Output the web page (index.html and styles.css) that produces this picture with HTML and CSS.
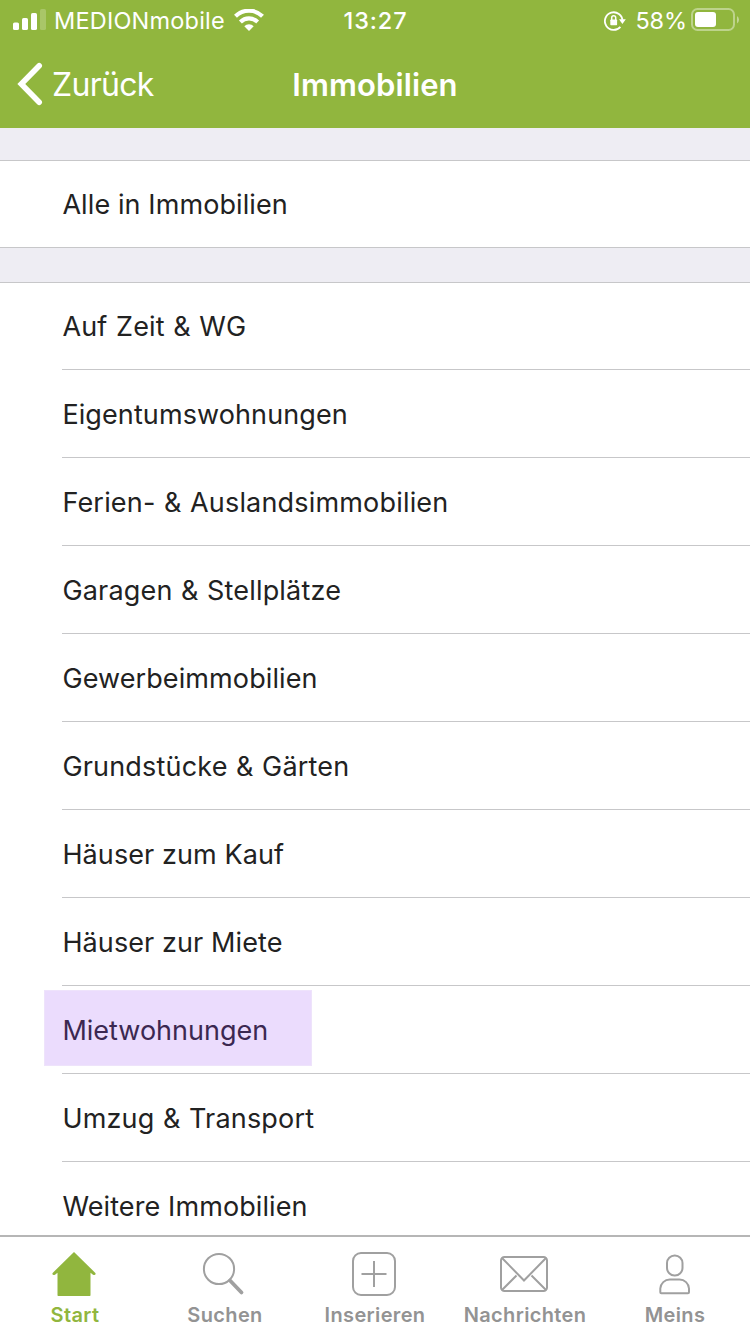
FILE: index.html
```html
<!DOCTYPE html>
<html lang="de">
<head>
<meta charset="utf-8">
<title>Immobilien</title>
<link rel="stylesheet" href="styles.css">
</head>
<body>
<div class="app">
  <header class="header">
    <div class="status">
      <div class="status-left">
        <svg class="signal" width="34" height="22" viewBox="0 0 34 22" fill="#fff"><rect x="0" y="13.5" width="6" height="7.5" rx="1.6"/><rect x="9" y="9" width="6" height="12" rx="1.6"/><rect x="18" y="4" width="6" height="17" rx="1.6"/><rect x="27" y="0" width="6" height="21" rx="1.6" opacity=".22"/></svg>
        <span class="carrier">MEDIONmobile</span>
        <svg class="wifi" width="30" height="22" viewBox="0 0 30 22"><g fill="none" stroke="#fff" stroke-width="4.1"><path d="M1.5 7.3a19 19 0 0 1 27 0"/><path d="M6.4 13a12 12 0 0 1 17.2 0"/></g><path d="M10.3 17.3a6.6 6.6 0 0 1 9.4 0L15 22z" fill="#fff"/></svg>
      </div>
      <span class="clock">13:27</span>
      <div class="status-right">
        <svg class="lock" width="22" height="20" viewBox="0 0 22 20"><path d="M16.4 15.8A8.8 8.8 0 1 1 18.5 10" fill="none" stroke="#fff" stroke-width="1.8"/><path d="M15 8.3h6.8L18.4 13z" fill="#fff"/><rect x="6.3" y="8.5" width="6.8" height="5.7" rx=".7" fill="#fff"/><path d="M7.7 9V6.8a2 2 0 0 1 4 0V9" fill="none" stroke="#fff" stroke-width="1.5"/></svg>
        <span class="percent">58%</span>
        <svg class="battery" width="48" height="24" viewBox="0 0 48 24"><rect x="1" y="1" width="42" height="21" rx="5.5" fill="none" stroke="#fff" stroke-opacity=".4" stroke-width="2"/><rect x="4" y="4" width="21" height="15" rx="3" fill="#fff"/><path d="M46 8a4.5 4.5 0 0 1 0 7.5z" fill="#fff" fill-opacity=".45"/></svg>
      </div>
    </div>
    <nav class="navbar">
      <a class="back"><svg width="28" height="44" viewBox="0 0 28 44"><path d="M23.2 3.8L5.3 22l17.9 18.2" fill="none" stroke="#fff" stroke-width="5.6" stroke-linecap="round" stroke-linejoin="miter"/></svg><span class="back-label">Zurück</span></a>
      <h1 class="title">Immobilien</h1>
    </nav>
  </header>
  <main class="content">
    <ul class="group group-single"><li class="row"><span>Alle in Immobilien</span></li></ul>
    <ul class="group">
      <li class="row pair"><span>Auf Zeit &amp; WG</span></li>
      <li class="row"><span>Eigentumswohnungen</span></li>
      <li class="row pair"><span>Ferien- &amp; Auslandsimmobilien</span></li>
      <li class="row pair"><span>Garagen &amp; Stellplätze</span></li>
      <li class="row"><span>Gewerbeimmobilien</span></li>
      <li class="row pair"><span>Grundstücke &amp; Gärten</span></li>
      <li class="row"><span>Häuser zum Kauf</span></li>
      <li class="row"><span>Häuser zur Miete</span></li>
      <li class="row marked"><span>Mietwohnungen</span></li>
      <li class="row pair"><span>Umzug &amp; Transport</span></li>
      <li class="row"><span>Weitere Immobilien</span></li>
    </ul>
  </main>
  <footer class="tabs">
    <a class="tab active"><svg width="50" height="48" viewBox="0 0 50 48"><path d="M25 2L46.6 23.2Q46.7 25.8 44 24.8L41.5 22.7V45.2Q41.5 46 40.7 46H9.3Q8.5 46 8.5 45.2V22.7L6 24.8Q3.3 25.8 3.4 23.2z" fill="#91b63e"/></svg><span>Start</span></a>
    <a class="tab"><svg width="50" height="48" viewBox="0 0 50 48" fill="none" stroke="#a0a0a0"><circle cx="20" cy="19" r="15.1" stroke-width="2"/><path d="M31 30.5L42.5 42.5" stroke-width="3.8" stroke-linecap="round"/></svg><span>Suchen</span></a>
    <a class="tab"><svg width="50" height="48" viewBox="0 0 50 48" fill="none" stroke="#a0a0a0" stroke-width="2"><rect x="4" y="3" width="42" height="42" rx="8"/><path d="M12.5 24H37.5M25 11V37"/></svg><span>Inserieren</span></a>
    <a class="tab"><svg width="50" height="48" viewBox="0 0 50 48" fill="none" stroke="#a0a0a0" stroke-width="2"><rect x="2" y="7" width="46" height="34" rx="3.5"/><path d="M3 8L25 30.5L47 8M3 40L17.5 25.5M47 40L32.5 25.5"/></svg><span>Nachrichten</span></a>
    <a class="tab"><svg width="50" height="48" viewBox="0 0 50 48" fill="none" stroke="#a0a0a0" stroke-width="2"><rect x="18" y="5.5" width="15.5" height="20" rx="7.6"/><path d="M11.3 42.2V38.5A9.5 9.5 0 0 1 20.8 29.5H30.5A9.5 9.5 0 0 1 40 38.5V42.2Q40 43.2 39 43.2H12.3Q11.3 43.2 11.3 42.2z"/></svg><span>Meins</span></a>
  </footer>
</div>
</body>
</html>
```
FILE: styles.css
```css
* { box-sizing: border-box; }
body { margin: 0; font-family: Inter, Roboto, sans-serif; color: #222; }
.app { width: 750px; height: 1334px; display: flex; flex-direction: column; overflow: hidden; background: #fff; }
.header { height: 128px; flex: none; background: #91b63e; color: #fff; }
.status { height: 40px; display: grid; grid-template-columns: 1fr auto 1fr; align-items: center; font-size: 23.5px; line-height: 40px; padding-top: 1px; }
.status-left { display: flex; align-items: center; padding-left: 13px; }
.status-right { display: flex; align-items: center; justify-content: flex-end; padding-right: 11px; }
.signal { margin-top: -3px; }
.carrier { margin-left: 7px; width: 180px; letter-spacing: .2px; }
.wifi { flex: none; margin-top: -2px; }
.clock { font-weight: 500; letter-spacing: .9px; padding-left: 1px; }
.lock { margin: -1px 9px 0 0; }
.percent { margin-right: 4px; letter-spacing: -.1px; }
.battery { margin-top: -2px; }
.navbar { height: 88px; display: grid; grid-template-columns: 1fr auto 1fr; align-items: center; }
.back { display: flex; align-items: center; padding: 0 0 1px 16px; }
.back-label { font-size: 32px; letter-spacing: -.7px; margin-left: 8px; padding-top: 2px; }
.title { margin: 0; font-size: 31px; font-weight: 600; letter-spacing: .1px; }
.content { flex: 1; min-height: 0; overflow: hidden; background: #eeedf3; padding-top: 32px; }
.group { list-style: none; margin: 0; padding: 0 0 0 62px; background: #fff; border-top: 1px solid #c7c7c9; }
.group-single { border-bottom: 1px solid #c7c7c9; margin-bottom: 34px; }
.row { height: 88px; display: flex; align-items: center; font-size: 27px; letter-spacing: .1px; padding: 2px 0 0 .4px; border-bottom: 1px solid #c7c7c9; }
.row:first-child { height: 87px; padding-top: 0; }
.group-single .row:first-child { height: 86px; border: 0; }
.pair { letter-spacing: .18px; word-spacing: .7px; }
.marked { padding: 0; align-items: flex-start; }
.marked span { display: flex; align-items: center; width: 268px; height: 76px; margin: 4px 0 0 -18px; padding: 4px 0 0 17.4px; letter-spacing: 0; background: #ebdcfd; color: #3b2851; border: 1px solid #eee3fb; }
.tabs { height: 99px; flex: none; display: grid; grid-template-columns: repeat(5, 1fr); border-top: 2px solid #b6b6b6; background: #fff; }
.tab { display: flex; flex-direction: column; align-items: center; padding-top: 13px; color: #939393; font-size: 20px; font-weight: 600; letter-spacing: .35px; }
.tab svg { margin-left: -2px; }
.tab span { line-height: 24px; margin-top: 5px; }
.active { color: #91b63e; }
```
